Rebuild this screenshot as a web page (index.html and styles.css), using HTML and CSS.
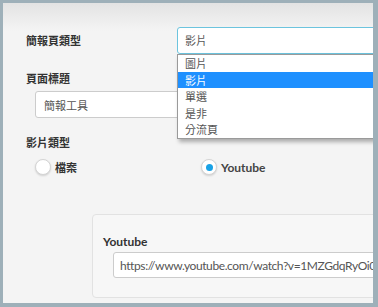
FILE: index.html
```html
<!DOCTYPE html>
<html lang="zh-Hant">
<head>
  <meta charset="UTF-8">
  <title>簡報頁設定</title>
  <link rel="stylesheet" href="styles.css">
</head>
<body>
  <div class="frame">
    <div class="row">
      <label class="lbl lbl-col">簡報頁類型</label>
      <div class="select-wrap">
        <div class="select">影片</div>
        <ul class="options">
          <li>圖片</li>
          <li class="active">影片</li>
          <li>單選</li>
          <li>是非</li>
          <li>分流頁</li>
        </ul>
      </div>
    </div>

    <div class="field">
      <label class="lbl">頁面標題</label>
      <input class="text" type="text" value="簡報工具" readonly>
    </div>

    <div class="field">
      <label class="lbl">影片類型</label>
      <div class="radios">
        <label class="radio"><span class="circle"></span>檔案</label>
        <label class="radio checked"><span class="circle"></span><span class="en">Youtube</span></label>
      </div>
    </div>

    <div class="panel">
      <label class="lbl en">Youtube</label>
      <input class="text url" type="text" value="https://www.youtube.com/watch?v=1MZGdqRyOi0" readonly>
    </div>
  </div>
</body>
</html>
```

FILE: styles.css
```css
body { margin: 0; font-family: Lato, "Noto Sans CJK TC", sans-serif; color: #333; }
.frame { position: relative; box-sizing: border-box; width: 378px; height: 307px; overflow: hidden;
  border: 3px solid #9eb0b9; border-right-width: 5px; border-bottom-width: 4px;
  background: linear-gradient(#e3e3e3, #f4f4f4 28px); padding: 24px 0 0 23px; }

.lbl { display: block; font-size: 11px; font-weight: bold; line-height: 17px; color: #333; }
.lbl.en, .en { font-size: 12px; font-weight: bold; }

.row { display: flex; align-items: center; height: 27px; }
.lbl-col { width: 151px; flex: none; }
.select-wrap { position: relative; width: 220px; flex: none; }
.select { box-sizing: border-box; height: 27px; line-height: 25px; padding-left: 7px; font-size: 11px; color: #555;
  background: #fff; border: 1px solid #6cc4de; border-radius: 3px 0 0 3px; }
.options { position: absolute; z-index: 5; top: 27px; left: 0; width: 100%; box-sizing: border-box; margin: 0; padding: 0;
  list-style: none; background: #fff; border: 1px solid #9a9a9a; box-shadow: 2px 3px 4px rgba(0,0,0,.3); }
.options li { height: 16.6px; line-height: 17px; padding-left: 7px; font-size: 11px; color: #555; }
.options li.active { background: #1e90ff; color: #fff; }

.field { margin-top: 16px; }
.text { display: block; box-sizing: border-box; width: 300px; height: 27px; margin: 4px 0 0 9px; padding: 0 8px;
  border: 1px solid #ccc; border-radius: 3px; background: #fff; font-family: inherit; font-size: 11px; color: #555; outline: none; }

.radios { display: flex; margin: 7px 0 0 9px; height: 18px; }
.radio { display: flex; align-items: center; gap: 4px; width: 166px; font-size: 11px; font-weight: bold; color: #333; }
.radio .en { color: #444; }
.circle { position: relative; box-sizing: border-box; width: 16px; height: 16px; border-radius: 50%; background: #fff;
  border: 1px solid #d4d4d4; box-shadow: 0 1px 2px rgba(0,0,0,.15); }
.radio.checked .circle::after { content: ""; position: absolute; left: 3.5px; top: 3.5px; width: 7px; height: 7px;
  border-radius: 50%; background: #19a2e6; }

.panel { width: 320px; margin: 38px 0 0 66px; padding: 18px 0 19px 10px; border: 1px solid #e2e2e2; border-radius: 4px;
  background: #f7f7f7; }
.panel .text { margin: 2px 0 0 10px; height: 26px; }
.text.url { padding-left: 6px; font-size: 12px; letter-spacing: -0.4px; color: #555; }
```
